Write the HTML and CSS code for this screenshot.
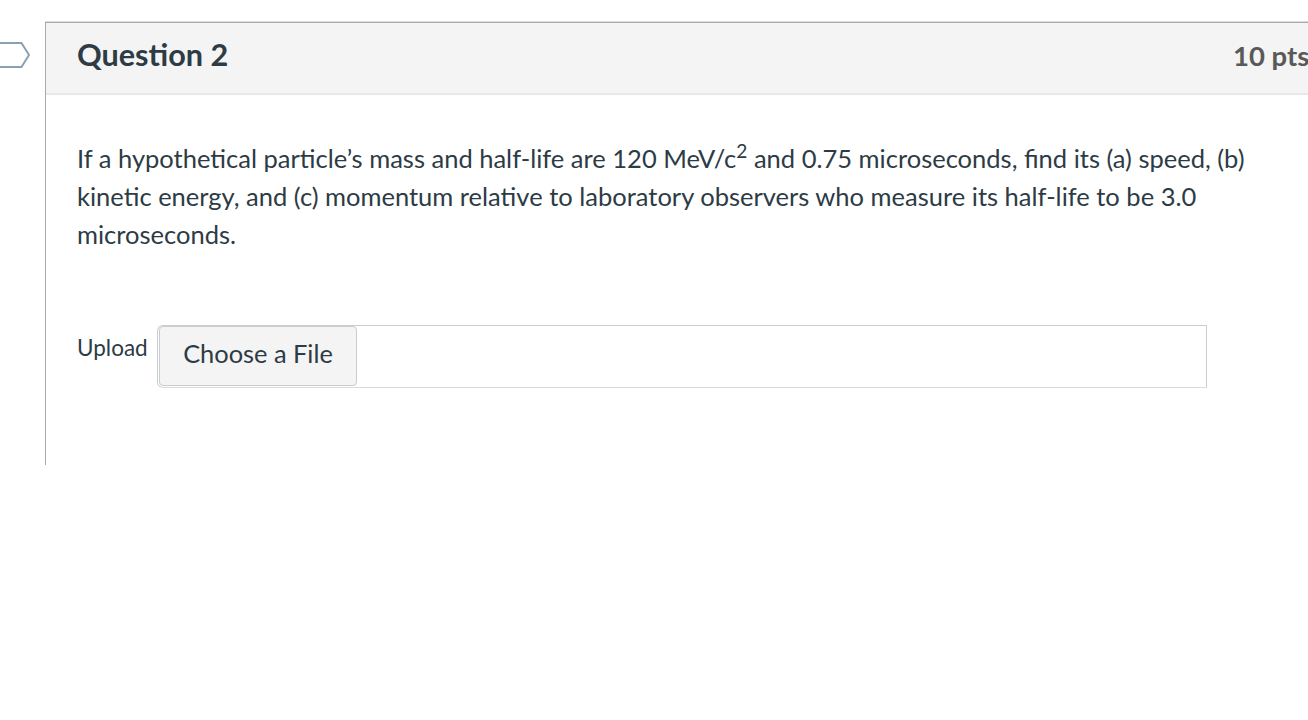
FILE: index.html
```html
<!DOCTYPE html>
<html lang="en">
<head>
    <meta charset="UTF-8">
    <meta name="viewport" content="width=device-width, initial-scale=1.0">
    <title>Question 2</title>
    <link rel="stylesheet" href="styles.css">
</head>
<body>

    <div class="quiz">
        <div class="flag">
            <svg width="32" height="28" viewBox="0 0 32 28">
                <path d="M-2 2H21.5L29 14L21.5 26H-2" fill="#fff" stroke="#8ca0b3" stroke-width="2"/>
            </svg>
        </div>
        <div class="question">
            <div class="header">
                <h2 class="name">Question 2</h2>
                <span class="points">10 pts</span>
            </div>
            <div class="text">
                <p class="question-text">If a hypothetical particle’s mass and half-life are 120 MeV/c<sup>2</sup> and 0.75 microseconds, find its (a) speed, (b)<br>kinetic energy, and (c) momentum relative to laboratory observers who measure its half-life to be 3.0<br>microseconds.</p>
                <div class="upload">
                    <label class="upload-label">Upload</label>
                    <div class="upload-box">
                        <button class="choose">Choose a File</button>
                    </div>
                </div>
            </div>
        </div>
    </div>

</body>
</html>
```

FILE: styles.css
```css
* {
    margin: 0;
    padding: 0;
    box-sizing: border-box;
}
body {
    font-family: 'Lato', sans-serif;
    background: #fff;
    color: #2d3b45;
    overflow: hidden;
}
.quiz {
    display: flex;
    padding-top: 22px;
}
.flag {
    width: 45px;
    padding-top: 19px;
    flex-shrink: 0;
}
.flag svg {
    display: block;
}
.question {
    width: 1290px;
    height: 443px;
    flex-shrink: 0;
    border-top: 1px solid #aaa;
    border-left: 1px solid #aaa;
    box-shadow: 0 -1px 0 #ddd;
}
.header {
    display: flex;
    height: 72px;
    padding: 0 0 6px 31px;
    align-items: center;
    background: #f4f4f4;
    border-bottom: 2px solid #e8e8e8;
}
.name {
    width: 1156px;
    padding-bottom: 1px;
    font-size: 30.6px;
    font-weight: bold;
}
.points {
    font-size: 27.5px;
    font-weight: bold;
    color: #595959;
    white-space: nowrap;
}
.text {
    padding: 44px 0 0 31px;
}
.question-text {
    font-size: 25.52px;
    line-height: 38px;
    white-space: nowrap;
}
.question-text sup {
    font-size: 75%;
    line-height: 0;
    position: relative;
    top: -0.5em;
    vertical-align: baseline;
}
.upload {
    display: flex;
    margin-top: 72px;
}
.upload-label {
    width: 80px;
    padding-top: 9px;
    font-size: 22.5px;
}
.upload-box {
    width: 1050px;
    height: 63px;
    padding: 0 1px;
    border: 1px solid #c7cdd1;
    border-bottom-color: #d8dcdf;
    border-radius: 6px 0 0 6px;
}
.choose {
    display: block;
    width: 198px;
    height: 60px;
    padding-bottom: 6px;
    font-family: inherit;
    font-size: 25.4px;
    color: #2d3b45;
    background: #f4f4f4;
    border: 1px solid #c7cdd1;
    border-radius: 4px;
}
```
